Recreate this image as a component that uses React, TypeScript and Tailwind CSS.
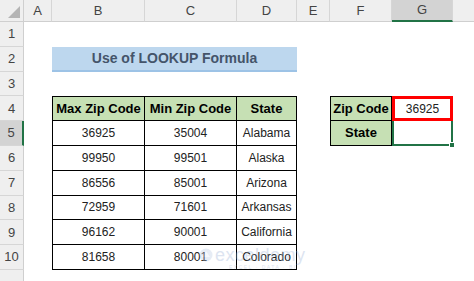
import type { ReactNode } from 'react';

const COLS = ['A', 'B', 'C', 'D', 'E', 'F', 'G', 'H'];

const DATA: [string, string, string][] = [
  ['36925', '35004', 'Alabama'],
  ['99950', '99501', 'Alaska'],
  ['86556', '85001', 'Arizona'],
  ['72959', '71601', 'Arkansas'],
  ['96162', '90001', 'California'],
  ['81658', '80001', 'Colorado'],
];

function Cell({ className = '', children }: { className?: string; children?: ReactNode }) {
  return (
    <div className={`flex items-center justify-center overflow-visible whitespace-nowrap ${className}`}>
      {children}
    </div>
  );
}

function RowHead({ n, selected }: { n?: number; selected?: boolean }) {
  return (
    <div
      className={`flex items-center justify-center border-b border-[#d6d6d6] text-[13px] text-[#444] ${
        selected ? 'bg-[#d3d3d3] border-r-2 border-r-[#217346]' : 'bg-[#efefef] border-r border-r-[#cfcfcf]'
      }`}
    >
      {n}
    </div>
  );
}

const hdr = 'bg-[#c6e0b4] font-bold text-[13px] text-black';
const tb = 'border-r border-b border-black';

export default function App() {
  return (
    <div className="relative h-[281px] w-[474px] overflow-hidden bg-white font-['Liberation_Sans',Arial,sans-serif] text-[12px] text-[#222]">
      <div className="grid w-[540px] grid-cols-[24px_28px_93px_92px_60px_33px_62px_61px_87px] grid-rows-[22px_repeat(11,24.8px)]">
        {/* column header row */}
        <div className="relative border-b border-r border-[#cfcfcf] bg-[#efefef]">
          <svg className="absolute bottom-[3px] right-[3px]" width="12" height="12" viewBox="0 0 12 12">
            <path d="M12 0 L12 12 L0 12 Z" fill="#b5b5b5" />
          </svg>
        </div>
        {COLS.map((c) => (
          <div
            key={c}
            className={`flex items-center justify-center border-r border-[#d6d6d6] text-[13px] text-[#444] ${
              c === 'G' ? 'bg-[#d3d3d3] border-b-2 border-b-[#217346]' : 'bg-[#efefef] border-b border-b-[#cfcfcf]'
            }`}
          >
            {/* H's letter sits past the right edge of the window */}
            {c === 'H' ? null : c}
          </div>
        ))}

        {/* row 1 */}
        <RowHead n={1} />
        {COLS.map((c) => <Cell key={c} />)}

        {/* row 2 */}
        <RowHead n={2} />
        <Cell />
        <Cell className="col-span-3 border-b-2 border-[#9dc3e6] bg-[#bdd7ee] text-[14px] font-bold text-[#44546a]">
          Use of LOOKUP Formula
        </Cell>
        <Cell />
        <Cell />
        <Cell />
        <Cell />

        {/* row 3 */}
        <RowHead n={3} />
        {COLS.map((c) => <Cell key={c} />)}

        {/* row 4 */}
        <RowHead n={4} />
        <Cell />
        <Cell className={`${hdr} ${tb} border-l border-t`}>Max Zip Code</Cell>
        <Cell className={`${hdr} ${tb} border-t`}>Min Zip Code</Cell>
        <Cell className={`${hdr} ${tb} border-t`}>State</Cell>
        <Cell />
        <Cell className={`${hdr} ${tb} border-l border-t`}>Zip Code</Cell>
        <Cell className="border-[3px] border-[#ff0000] text-[12px] text-[#222]">36925</Cell>
        <Cell />

        {/* rows 5-10 */}
        {DATA.map((r, i) => (
          <div key={r[0]} className="contents">
            <RowHead n={i + 5} selected={i === 0} />
            <Cell />
            <Cell className={`${tb} border-l`}>{r[0]}</Cell>
            <Cell className={tb}>{r[1]}</Cell>
            <Cell className={tb}>{r[2]}</Cell>
            <Cell />
            {i === 0 ? (
              <>
                <Cell className={`${hdr} ${tb} border-l`}>State</Cell>
                <Cell className="relative border-x-2 border-b-2 border-[#217346]">
                  <span className="absolute -bottom-[4px] -right-[4px] h-[6px] w-[6px] border border-white bg-[#217346]" />
                </Cell>
              </>
            ) : (
              <>
                <Cell />
                <Cell />
              </>
            )}
            <Cell />
          </div>
        ))}

        {/* row 11 (label falls below the visible area) */}
        <RowHead />
        {COLS.map((c) => <Cell key={c} />)}
      </div>

      {/* watermark */}
      <div className="pointer-events-none absolute left-[199px] top-[246px] flex items-start gap-[2px] opacity-35">
        <svg width="14" height="18" viewBox="0 0 14 18">
          <circle cx="7" cy="9" r="6.5" fill="#b9c9e4" />
          <path d="M3 11 L7 5 L11 11 Z" fill="#e4ebf6" />
        </svg>
        <div className="flex flex-col leading-none">
          <span className="text-[18px] tracking-[0.5px] text-[#9fb4d8]">exceldemy</span>
          <span className="mt-[1px] pl-[14px] text-[5px] tracking-[1.5px] text-[#9fb4d8]">EXCEL · DATA · BI</span>
        </div>
      </div>
    </div>
  );
}
